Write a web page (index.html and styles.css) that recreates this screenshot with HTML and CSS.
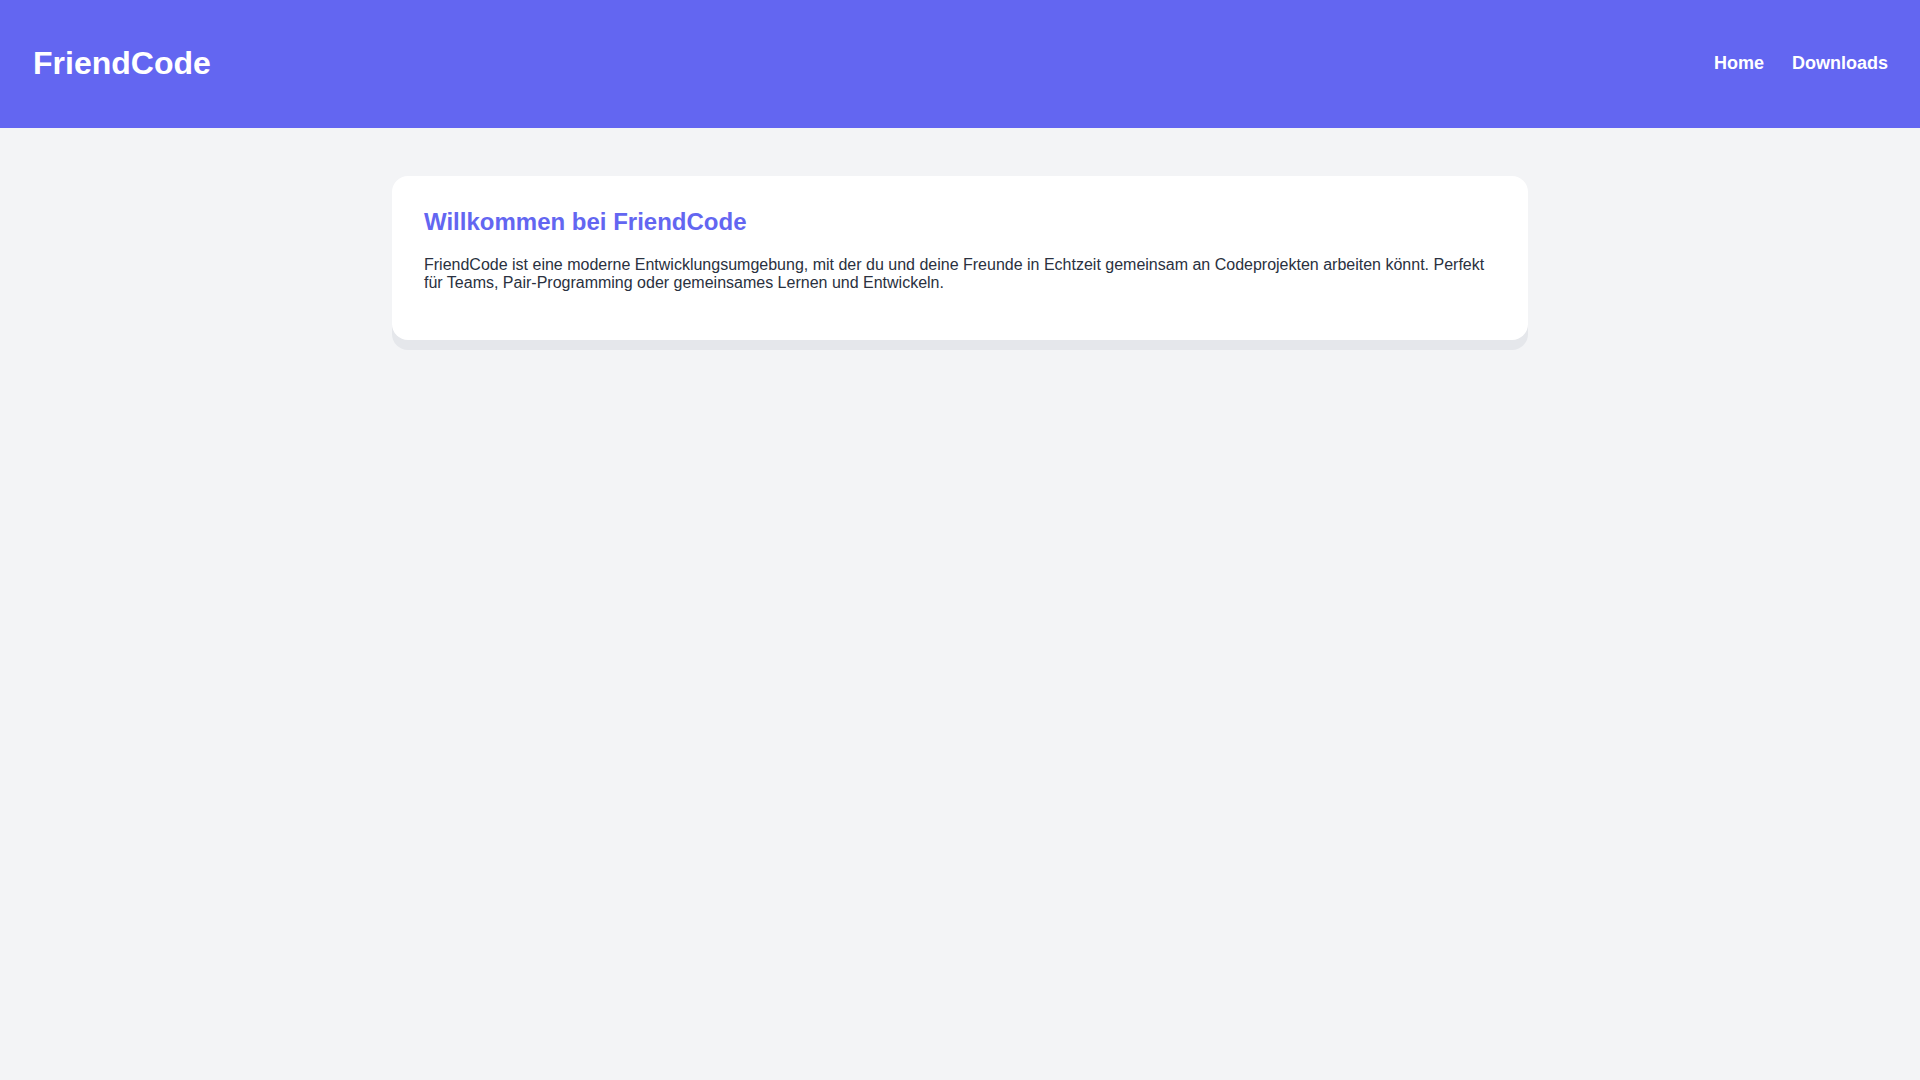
FILE: index.html
```html
<!DOCTYPE html>
<html lang="de">
<head>
<meta charset="utf-8">
<title>FriendCode</title>
<link rel="stylesheet" href="styles.css">
</head>
<body>
<header class="topbar">
  <div class="logo">FriendCode</div>
  <nav class="nav">
    <a href="#" class="nav-link">Home</a>
    <a href="#" class="nav-link">Downloads</a>
  </nav>
</header>
<main class="container">
  <section class="card">
    <h2 class="card-title">Willkommen bei FriendCode</h2>
    <p class="card-text">FriendCode ist eine moderne Entwicklungsumgebung, mit der du und deine Freunde in Echtzeit gemeinsam an Codeprojekten arbeiten könnt. Perfekt für Teams, Pair-Programming oder gemeinsames Lernen und Entwickeln.</p>
  </section>
</main>
</body>
</html>
```
FILE: styles.css
```css
* { box-sizing: border-box; }
html, body { margin: 0; padding: 0; }
body {
  background: #f3f4f6;
  font-family: "Liberation Sans", Arial, sans-serif;
  color: #2d3748;
}
.topbar {
  height: 128px;
  background: #6366f1;
  display: flex;
  align-items: center;
  justify-content: space-between;
  padding: 0 32px 2px 33px;
}
.logo {
  color: #fff;
  font-size: 32px;
  font-weight: bold;
}
.nav {
  display: flex;
  gap: 28px;
}
.nav-link {
  color: #fff;
  font-size: 18px;
  font-weight: bold;
  text-decoration: none;
}
.container {
  max-width: 1200px;
  margin: 0 auto;
  padding: 48px 32px;
}
.card {
  background: #fff;
  border-radius: 16px;
  box-shadow: 0 10px 0 #e5e7eb;
  padding: 32px;
}
.card-title {
  margin: 0 0 20px;
  font-size: 24px;
  font-weight: bold;
  color: #6366f1;
}
.card-text {
  margin: 0 0 15px;
  font-size: 16px;
  line-height: 1.15;
  color: #2a3140;
}
```
